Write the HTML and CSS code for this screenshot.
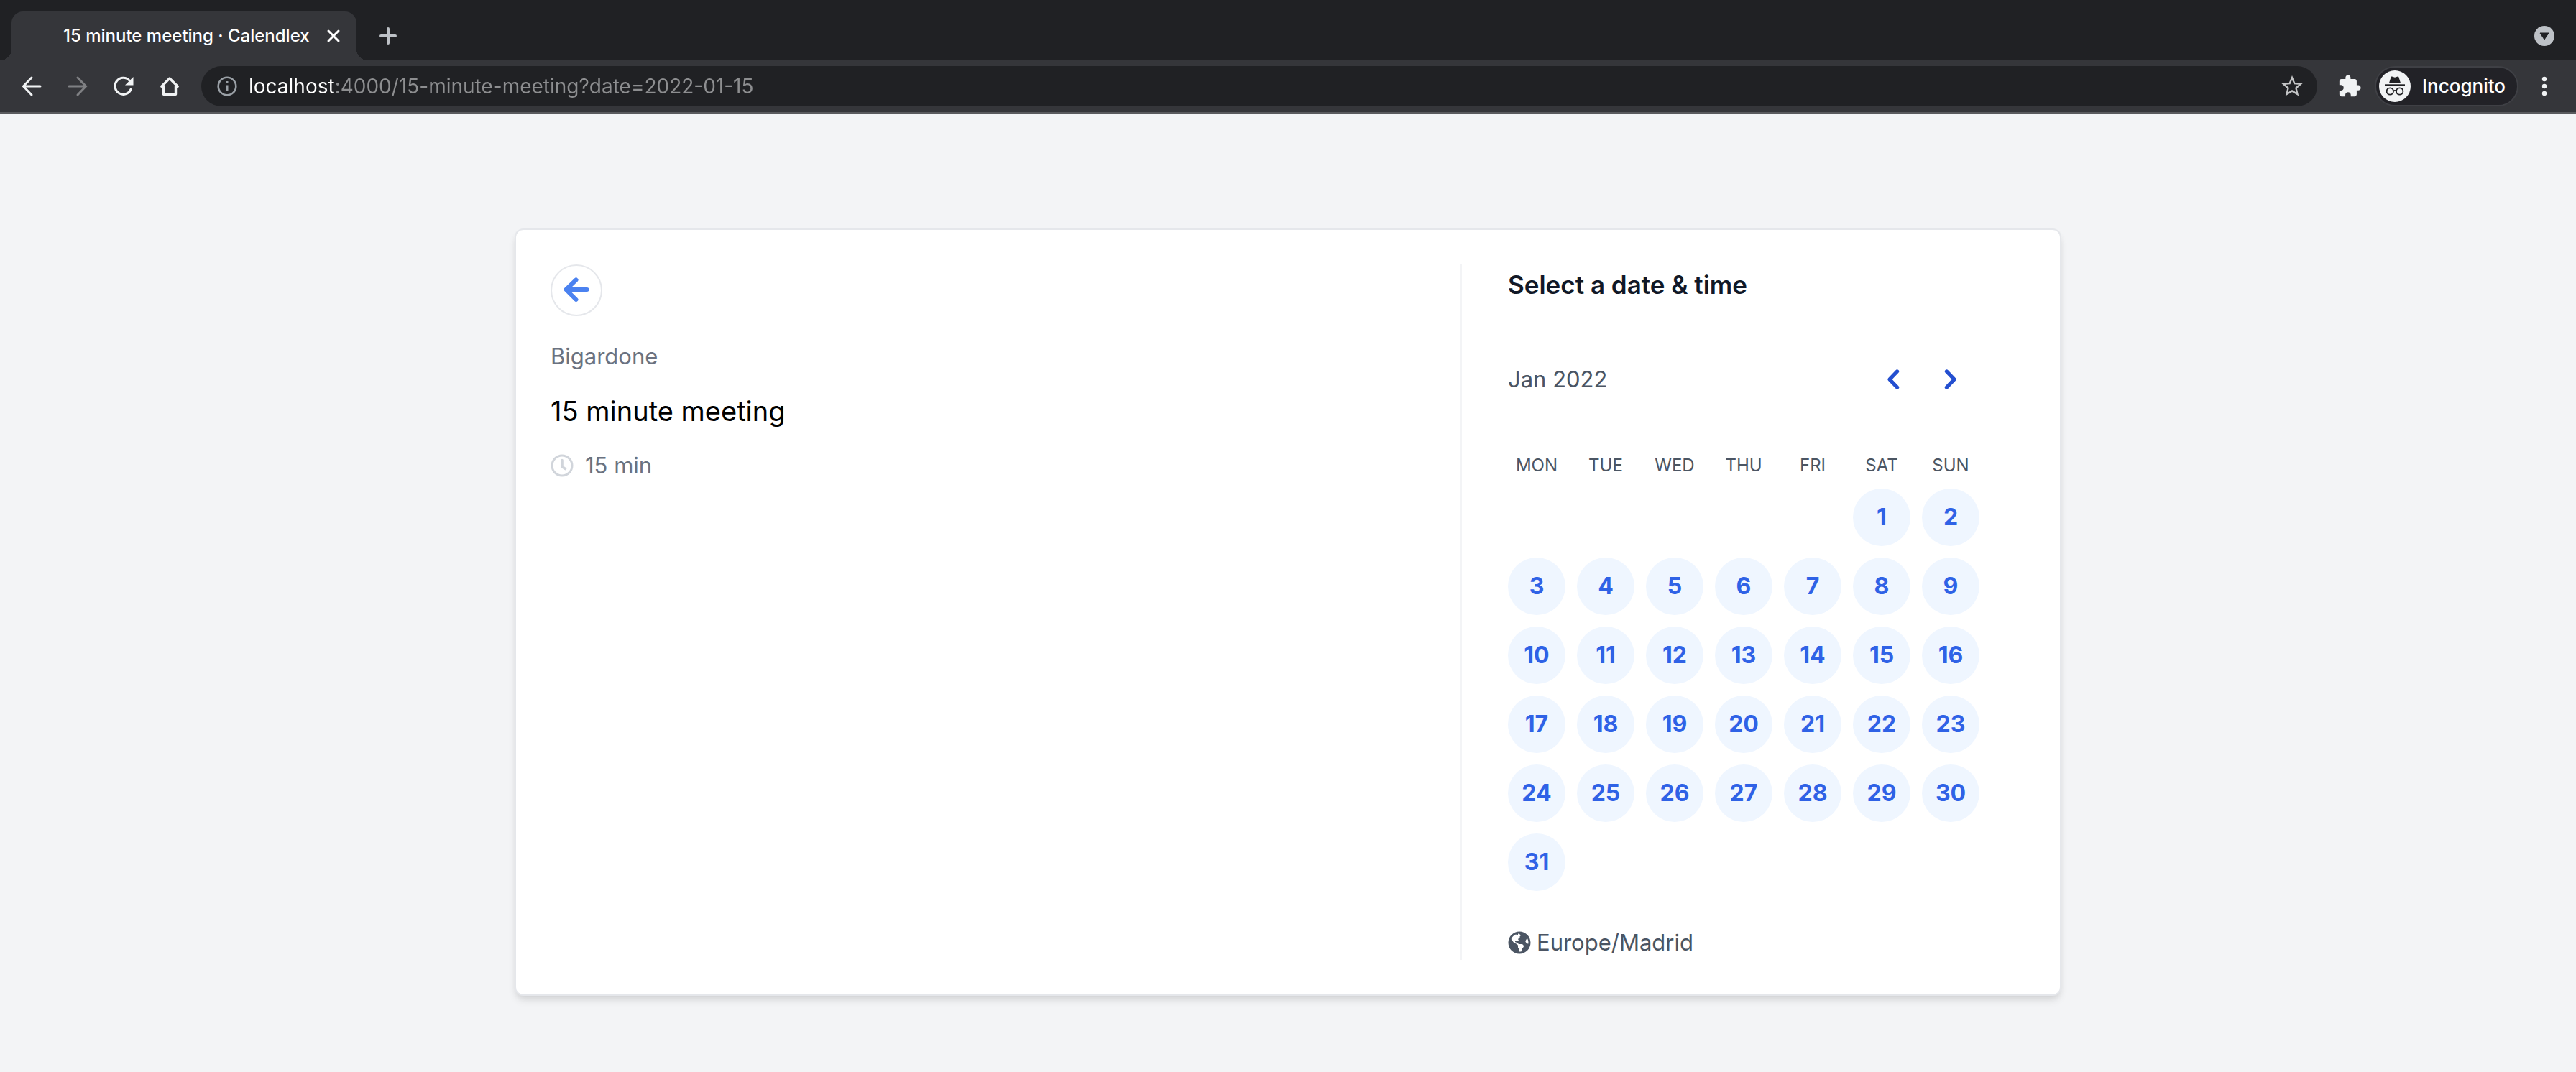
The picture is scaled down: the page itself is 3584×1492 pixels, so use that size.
FILE: index.html
```html
<!DOCTYPE html>
<html lang="en">
<head>
<meta charset="utf-8">
<meta name="viewport" content="width=device-width, initial-scale=1">
<title>15 minute meeting · Calendlex</title>
<link rel="stylesheet" href="styles.css">
</head>
<body>
<header class="browser">
  <div class="tab-strip">
    <div class="tab">
      <span class="tab-title">15 minute meeting · Calendlex</span>
      <button class="icon-button tab-close" aria-label="Close tab">
        <svg width="20" height="20" viewBox="0 0 20 20" fill="none" stroke="#fff" stroke-width="3" stroke-linecap="round"><path d="M3 3l14 14M17 3L3 17"/></svg>
      </button>
    </div>
    <button class="icon-button new-tab" aria-label="New tab">
      <svg width="24" height="24" viewBox="0 0 24 24" fill="none" stroke="#bdc1c6" stroke-width="4" stroke-linecap="round"><path d="M12 2v20M2 12h20"/></svg>
    </button>
    <button class="icon-button tab-search" aria-label="Search tabs">
      <svg width="28" height="28" viewBox="0 0 28 28"><circle cx="14" cy="14" r="14" fill="#bdc1c6"/><path d="M8 10h12l-6 9z" fill="#202124" stroke="#202124" stroke-width="1" stroke-linejoin="round"/></svg>
    </button>
  </div>
  <div class="toolbar">
    <nav class="toolbar-nav" aria-label="Browser navigation">
      <button class="icon-button" aria-label="Back">
        <svg width="32" height="32" viewBox="0 0 32 32" fill="none" stroke="#f1f3f4" stroke-width="3" stroke-linecap="round"><path d="M28 16H5M16 4L4.500 16L16 28"/></svg>
      </button>
      <button class="icon-button" aria-label="Forward" disabled>
        <svg width="32" height="32" viewBox="0 0 32 32" fill="none" stroke="#7f8083" stroke-width="3" stroke-linecap="round"><path d="M4 16h23M16 4l11.500 12L16 28"/></svg>
      </button>
      <button class="icon-button" aria-label="Reload">
        <svg width="32" height="32" viewBox="0 0 32 32" fill="none"><path d="M26 20.500A11.500 11.500 0 1 1 24 8" stroke="#f1f3f4" stroke-width="3.200" stroke-linecap="round"/><path d="M29.500 3v11.500H18z" fill="#f1f3f4"/></svg>
      </button>
      <button class="icon-button" aria-label="Home">
        <svg width="32" height="32" viewBox="0 0 32 32" fill="none" stroke="#f1f3f4" stroke-width="3.400" stroke-linejoin="round"><path d="M4.800 16.300L16 5l11.200 11.300H24.500V27.300H7.500V16.300z"/></svg>
      </button>
    </nav>
    <form class="address">
      <svg class="address-info" width="28" height="28" viewBox="0 0 28 28" fill="none" stroke="#9aa0a6" stroke-width="2.600" aria-hidden="true"><circle cx="14" cy="14" r="12.300"/><path d="M14 12.500v8M14 7v3" stroke-width="3"/></svg>
      <input class="address-input" type="text" aria-label="Address" value="localhost:4000/15-minute-meeting?date=2022-01-15" spellcheck="false">
      <button class="icon-button" type="button" aria-label="Bookmark this page">
        <svg width="36" height="36" viewBox="0 0 24 24" fill="#c3c4c5"><path d="M22 9.240l-7.190-.62L12 2 9.190 8.630 2 9.240l5.460 4.730L5.820 21 12 17.270 18.180 21l-1.630-7.030L22 9.240zM12 15.400l-3.760 2.270 1-4.280-3.320-2.880 4.380-.38L12 6.100l1.710 4.040 4.380.38-3.320 2.880 1 4.280L12 15.400z"/></svg>
      </button>
    </form>
    <button class="icon-button extensions" aria-label="Extensions">
      <svg width="34" height="34" viewBox="0 0 24 24" fill="#f1f3f4"><path d="M20.500 11H19V7c0-1.100-.9-2-2-2h-4V3.500C13 2.120 11.880 1 10.500 1S8 2.120 8 3.500V5H4c-1.100 0-1.990.9-1.990 2v3.800H3.500c1.490 0 2.700 1.210 2.700 2.700s-1.210 2.700-2.700 2.700H2V20c0 1.100.9 2 2 2h3.800v-1.500c0-1.490 1.210-2.700 2.700-2.700 1.490 0 2.700 1.210 2.700 2.700V22H17c1.100 0 2-.9 2-2v-4h1.500c1.380 0 2.500-1.120 2.500-2.500S21.880 11 20.500 11z"/></svg>
    </button>
    <button class="profile">
      <svg width="44" height="44" viewBox="0 0 44 44" fill="none" aria-hidden="true">
        <circle cx="22" cy="22" r="22" fill="#f1f3f4"/>
        <path d="M14 17.500l2.600-8.300c.2-.6.800-.8 1.400-.6l4 1.200 4-1.200c.6-.2 1.200 0 1.400.6l2.600 8.300z" fill="#202124"/>
        <path d="M8 20.300h28" stroke="#202124" stroke-width="2"/>
        <g stroke="#202124" stroke-width="1.800"><circle cx="15.300" cy="29" r="4.700"/><circle cx="28.700" cy="29" r="4.700"/><path d="M20 28.600q2-1.200 4 0"/></g>
      </svg>
      <span>Incognito</span>
    </button>
    <button class="icon-button menu" aria-label="Menu">
      <svg width="28" height="28" viewBox="0 0 28 28" fill="#f1f3f4"><circle cx="14" cy="4" r="3.200"/><circle cx="14" cy="14" r="3.200"/><circle cx="14" cy="24" r="3.200"/></svg>
    </button>
  </div>
</header>

<main class="page">
  <div class="card">
    <section class="event">
      <a class="back" href="#" aria-label="Back to event types">
        <svg width="36" height="36" viewBox="0 0 36 36" fill="none" stroke="#4b82f0" stroke-width="6" stroke-linecap="round" stroke-linejoin="round"><path d="M32.500 17H4M17.500 3.500L3.500 17l14 14"/></svg>
      </a>
      <p class="owner">Bigardone</p>
      <h1 class="event-name">15 minute meeting</h1>
      <p class="duration">
        <svg width="32" height="32" viewBox="0 0 32 32" fill="none" stroke="#d1d5db" aria-hidden="true"><circle cx="16" cy="16" r="14" stroke-width="3"/><path d="M16 8.500V17.500l4.500 3" stroke-width="3.600" stroke-linecap="round" stroke-linejoin="round"/></svg>
        15 min
      </p>
    </section>
    <section class="schedule">
      <h2 class="schedule-title">Select a date &amp; time</h2>
      <div class="month">
        <span class="month-name">Jan 2022</span>
        <a class="month-link" href="#" aria-label="Previous month">
          <svg width="32" height="32" viewBox="0 0 32 32" fill="none" stroke="#244fd0" stroke-width="5.400" stroke-linecap="round" stroke-linejoin="round"><path d="M21.500 5L11 16l10.500 11"/></svg>
        </a>
        <a class="month-link" href="#" aria-label="Next month">
          <svg width="32" height="32" viewBox="0 0 32 32" fill="none" stroke="#244fd0" stroke-width="5.400" stroke-linecap="round" stroke-linejoin="round"><path d="M10.500 5L21 16 10.500 27"/></svg>
        </a>
      </div>
      <table class="calendar">
        <thead>
          <tr><th scope="col">MON</th><th scope="col">TUE</th><th scope="col">WED</th><th scope="col">THU</th><th scope="col">FRI</th><th scope="col">SAT</th><th scope="col">SUN</th></tr>
        </thead>
        <tbody>
          <tr><td></td><td></td><td></td><td></td><td></td><td><a class="day" href="#">1</a></td><td><a class="day" href="#">2</a></td></tr>
          <tr><td><a class="day" href="#">3</a></td><td><a class="day" href="#">4</a></td><td><a class="day" href="#">5</a></td><td><a class="day" href="#">6</a></td><td><a class="day" href="#">7</a></td><td><a class="day" href="#">8</a></td><td><a class="day" href="#">9</a></td></tr>
          <tr><td><a class="day" href="#">10</a></td><td><a class="day" href="#">11</a></td><td><a class="day" href="#">12</a></td><td><a class="day" href="#">13</a></td><td><a class="day" href="#">14</a></td><td><a class="day" href="#">15</a></td><td><a class="day" href="#">16</a></td></tr>
          <tr><td><a class="day" href="#">17</a></td><td><a class="day" href="#">18</a></td><td><a class="day" href="#">19</a></td><td><a class="day" href="#">20</a></td><td><a class="day" href="#">21</a></td><td><a class="day" href="#">22</a></td><td><a class="day" href="#">23</a></td></tr>
          <tr><td><a class="day" href="#">24</a></td><td><a class="day" href="#">25</a></td><td><a class="day" href="#">26</a></td><td><a class="day" href="#">27</a></td><td><a class="day" href="#">28</a></td><td><a class="day" href="#">29</a></td><td><a class="day" href="#">30</a></td></tr>
          <tr><td><a class="day" href="#">31</a></td><td></td><td></td><td></td><td></td><td></td><td></td></tr>
        </tbody>
      </table>
      <p class="timezone">
        <svg width="32" height="32" viewBox="0 0 496 512" fill="#4b5563" aria-hidden="true"><path d="M248 8C111.030 8 0 119.030 0 256s111.030 248 248 248 248-111.030 248-248S384.970 8 248 8zm82.290 357.600c-3.900 3.880-7.990 7.950-11.310 11.280-2.990 3-5.100 6.700-6.170 10.710-1.510 5.660-2.730 11.380-4.770 16.870l-17.390 46.850c-13.760 3-28 4.690-42.650 4.690v-27.380c1.690-12.620-7.640-36.260-22.630-51.250-6-6-9.370-14.140-9.370-22.630v-32.010c0-11.640-6.270-22.340-16.460-27.970-14.370-7.950-34.810-19.060-48.810-26.110-11.480-5.780-22.100-13.140-31.650-21.750l-.8-.72a114.792 114.792 0 0 1-18.060-20.740c-9.380-13.770-24.660-36.420-34.590-51.140 20.470-45.500 57.360-82.040 103.200-101.890l24.010 12.010C203.480 89.740 216 82.010 216 70.110v-11.300c7.990-1.290 16.120-2.110 24.390-2.420l28.300 28.300c6.250 6.250 6.250 16.380 0 22.630L264 112l-10.340 10.340c-3.120 3.120-3.120 8.190 0 11.310l4.690 4.690c3.120 3.120 3.120 8.190 0 11.310l-8 8a8.008 8.008 0 0 1-5.660 2.340h-8.990c-2.080 0-4.080.81-5.580 2.270l-9.920 9.650a8.008 8.008 0 0 0-1.580 9.310l15.590 31.190c2.660 5.320-1.210 11.580-7.150 11.580h-5.640c-1.930 0-3.790-.7-5.240-1.960l-9.280-8.060a16.017 16.017 0 0 0-15.550-3.100l-31.170 10.390a11.950 11.950 0 0 0-8.170 11.340c0 4.530 2.560 8.660 6.610 10.690l11.080 5.540c9.410 4.710 19.790 7.160 30.310 7.160s22.590 27.290 32 32h66.750c8.490 0 16.620 3.370 22.630 9.370l13.690 13.690a30.503 30.503 0 0 1 8.930 21.570 46.536 46.536 0 0 1-13.720 32.980zM417 274.250c-5.790-1.450-10.840-5-14.150-9.970l-17.980-26.970a23.970 23.970 0 0 1 0-26.620l19.590-29.380c2.320-3.470 5.500-6.290 9.240-8.150l12.980-6.490C440.200 193.590 448 223.870 448 256c0 8.670-.74 17.160-1.820 25.540L417 274.250z"/></svg>
        Europe/Madrid
      </p>
    </section>
  </div>
</main>
</body>
</html>
```
FILE: styles.css
```css
*,
*::before,
*::after {
  box-sizing: border-box;
}

body {
  margin: 0;
  min-height: 100vh;
  background: #f3f4f6;
  color: #000;
  font: 400 31px/48px Inter, "Liberation Sans", sans-serif;
}

h1,
h2,
p {
  margin: 0;
  font-weight: 400;
}

svg {
  display: block;
  flex: none;
}

button {
  border: 0;
  margin: 0;
  padding: 0;
  background: none;
  color: inherit;
  font: inherit;
}

.icon-button {
  display: flex;
  flex: none;
  align-items: center;
  justify-content: center;
}

/* Browser window */

.browser {
  background: #35363a;
  border-bottom: 2px solid #5a5b5e;
  color: #fff;
}

.tab-strip {
  display: flex;
  align-items: center;
  height: 84px;
  padding: 16px 30px 0 16px;
  background: #202124;
}

.tab {
  position: relative;
  display: flex;
  align-items: center;
  justify-content: space-between;
  width: 480px;
  height: 68px;
  padding: 0 22px 0 72px;
  border-radius: 16px 16px 0 0;
  background: #35363a;
}

.tab::before,
.tab::after {
  content: "";
  position: absolute;
  bottom: 0;
  width: 16px;
  height: 16px;
}

.tab::before {
  right: 100%;
  background: radial-gradient(circle at 0 0, #202124 16px, #35363a 16px);
}

.tab::after {
  left: 100%;
  background: radial-gradient(circle at 100% 0, #202124 16px, #35363a 16px);
}

.tab-title {
  font-size: 24px;
  font-weight: 500;
  line-height: 32px;
  white-space: nowrap;
}

.new-tab {
  margin-left: 32px;
}

.tab-search {
  margin-left: auto;
}

.toolbar {
  display: flex;
  align-items: center;
  height: 72px;
  padding: 8px 30px 8px 28px;
}

.toolbar-nav {
  display: flex;
  gap: 32px;
  margin-right: 28px;
}

.address {
  display: flex;
  flex: 1;
  align-items: center;
  height: 56px;
  padding: 0 17px 0 22px;
  border-radius: 28px;
  background: #202124;
}

.address-input {
  flex: 1;
  min-width: 0;
  height: 56px;
  margin: 0;
  padding: 0 16px;
  border: 0;
  outline: 0;
  /* The host is brighter than the rest of the address */
  background: linear-gradient(90deg, #fff 136px, #8d8e90 136px);
  -webkit-background-clip: text;
  background-clip: text;
  color: transparent;
  font: 400 28px/40px Inter, "Liberation Sans", sans-serif;
}

.extensions {
  margin: 0 18px 0 28px;
}

.profile {
  display: flex;
  align-items: center;
  gap: 16px;
  width: 200px;
  height: 56px;
  padding: 0 4px;
  border: 2px solid #3f4045;
  border-radius: 28px;
  background: #222227;
  font-size: 26px;
  font-weight: 500;
  line-height: 32px;
}

.menu {
  margin-left: 22px;
}

/* Booking page */

.page {
  padding: 160px 48px 106px;
}

.card {
  display: grid;
  grid-template-columns: 1fr 786px;
  max-width: 2152px;
  margin: 0 auto;
  padding: 48px;
  border: 2px solid #e5e7eb;
  border-radius: 12px;
  background: #fff;
  box-shadow: 0 8px 12px -2px rgba(0, 0, 0, 0.1), 0 4px 8px -2px rgba(0, 0, 0, 0.06);
}

.event {
  display: flex;
  flex-direction: column;
  align-items: flex-start;
}

.back {
  display: flex;
  align-items: center;
  justify-content: center;
  width: 72px;
  height: 72px;
  margin-bottom: 32px;
  border: 2px solid #e5e7eb;
  border-radius: 50%;
}

.owner,
.duration {
  color: #6b7280;
}

.event-name {
  margin: 24px 0;
  font-size: 38px;
  line-height: 56px;
}

.duration {
  display: flex;
  align-items: center;
  gap: 16px;
}

.schedule {
  padding-left: 64px;
  border-left: 2px solid #f3f4f6;
  color: #4b5563;
}

.schedule-title {
  margin-bottom: 64px;
  color: #111827;
  font-size: 35px;
  font-weight: 600;
  line-height: 56px;
}

.month {
  display: flex;
  align-items: center;
  width: 656px;
  margin-bottom: 64px;
}

.month-name {
  flex: 1;
}

.month-link {
  display: flex;
  align-items: center;
  justify-content: center;
  width: 80px;
  height: 80px;
}

.calendar {
  border-collapse: collapse;
}

.calendar th {
  padding: 0 16px 16px 0;
  font-size: 24px;
  font-weight: 400;
  line-height: 32px;
}

.calendar td {
  width: 96px;
  height: 96px;
  padding: 0 16px 16px 0;
}

.day {
  display: flex;
  align-items: center;
  justify-content: center;
  width: 80px;
  height: 80px;
  border-radius: 50%;
  background: #eff6ff;
  color: #2f62e6;
  font-size: 32px;
  font-weight: 700;
  text-decoration: none;
}

.timezone {
  display: flex;
  align-items: center;
  gap: 8px;
  margin-top: 32px;
}
```
